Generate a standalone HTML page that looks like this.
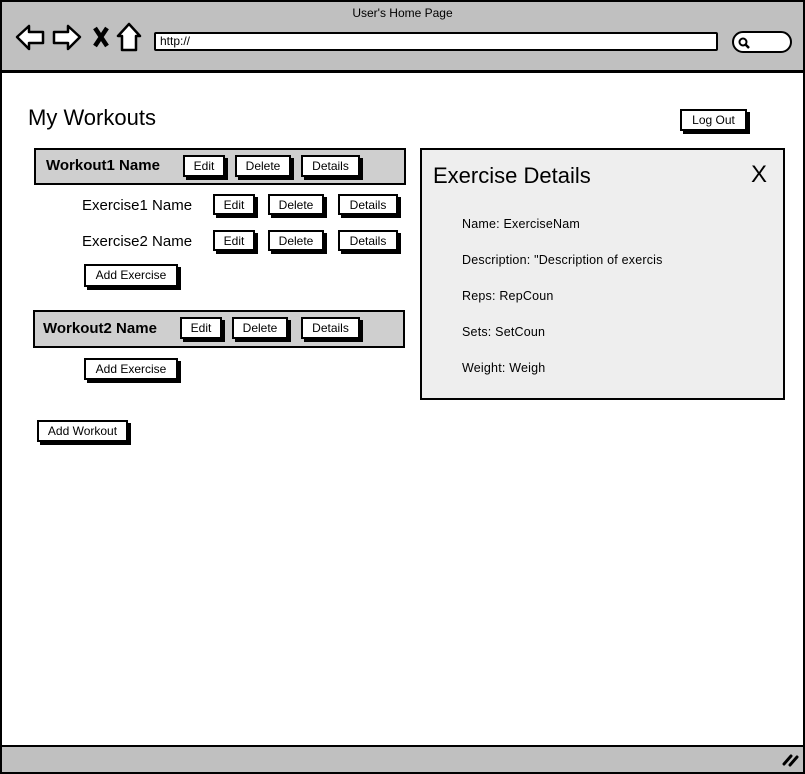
<!DOCTYPE html>
<html><head><style>
*{margin:0;padding:0;box-sizing:border-box}
body{width:805px;height:774px;background:#fff;position:relative;overflow:hidden;font-family:"Liberation Sans",sans-serif;color:#000}
.a{position:absolute}
.btn{position:absolute;background:#fff;border:2px solid #000;box-shadow:3px 3px 0 #000;font-size:12px;text-align:center;line-height:18px}
.t{position:absolute;white-space:nowrap}
.f{position:absolute;left:462px;font-size:12.5px;letter-spacing:0.2px;white-space:nowrap}
</style></head><body>
<div class="a" style="left:0;top:0;width:805px;height:774px;border:2px solid #000"></div>
<div class="a" style="left:0;top:0;width:805px;height:73px;background:#c0c0c0;border:2px solid #000;border-bottom-width:3px"></div>
<div class="t" style="left:0;width:805px;text-align:center;top:6px;font-size:12px">User's Home Page</div>
<svg class="a" style="left:14px;top:22px" width="130" height="32" viewBox="0 0 130 32">
<g fill="#fff" stroke="#000" stroke-width="2.5" stroke-linejoin="round">
<path d="M3 15 L15 4 L15 10 L29 10 L29 21 L15 21 L15 27 Z"/>
<path d="M66 15 L54 4 L54 10 L40 10 L40 21 L54 21 L54 27 Z"/>
<path d="M115 2 L104 14 L108 14 L108 28 L122 28 L122 14 L126 14 Z"/>
</g>
<path d="M81 6 L93 24 M93 6 L81 24" stroke="#000" stroke-width="4.5"/>
</svg>
<div class="a" style="left:154px;top:32px;width:564px;height:19px;background:#fff;border:2px solid #000;border-radius:2px"></div>
<div class="t" style="left:160px;top:34px;font-size:12px">http://</div>
<div class="a" style="left:732px;top:31px;width:60px;height:22px;background:#fff;border:2px solid #000;border-radius:11px"></div>
<svg class="a" style="left:737px;top:36px" width="14" height="14"><circle cx="6" cy="6" r="3.5" fill="none" stroke="#000" stroke-width="2"/><path d="M8 8 L12 12" stroke="#000" stroke-width="2.5"/></svg>
<div class="a" style="left:0;top:745px;width:805px;height:29px;background:#c0c0c0;border:2px solid #000"></div>
<svg class="a" style="left:782px;top:752px" width="18" height="16"><path d="M2 12 L9 4 M8 13 L15 5" stroke="#000" stroke-width="3" stroke-linecap="round"/></svg>

<div class="t" style="left:28px;top:105px;font-size:22px">My Workouts</div>
<div class="btn" style="left:680px;top:109px;width:67px;height:22px">Log Out</div>

<div class="a" style="left:34px;top:148px;width:372px;height:37px;background:#cfcfcf;border:2px solid #000"></div>
<div class="t" style="left:46px;top:157px;font-size:15px;font-weight:bold">Workout1 Name</div>
<div class="btn" style="left:183px;top:155px;width:42px;height:22px">Edit</div>
<div class="btn" style="left:235px;top:155px;width:56px;height:22px">Delete</div>
<div class="btn" style="left:301px;top:155px;width:59px;height:22px">Details</div>

<div class="t" style="left:82px;top:197px;font-size:15px">Exercise1 Name</div>
<div class="btn" style="left:213px;top:194px;width:42px;height:21px">Edit</div>
<div class="btn" style="left:268px;top:194px;width:56px;height:21px">Delete</div>
<div class="btn" style="left:338px;top:194px;width:60px;height:21px">Details</div>
<div class="t" style="left:82px;top:233px;font-size:15px">Exercise2 Name</div>
<div class="btn" style="left:213px;top:230px;width:42px;height:21px">Edit</div>
<div class="btn" style="left:268px;top:230px;width:56px;height:21px">Delete</div>
<div class="btn" style="left:338px;top:230px;width:60px;height:21px">Details</div>
<div class="btn" style="left:84px;top:264px;width:94px;height:23px">Add Exercise</div>

<div class="a" style="left:33px;top:310px;width:372px;height:38px;background:#cfcfcf;border:2px solid #000"></div>
<div class="t" style="left:43px;top:320px;font-size:15px;font-weight:bold">Workout2 Name</div>
<div class="btn" style="left:180px;top:317px;width:42px;height:22px">Edit</div>
<div class="btn" style="left:232px;top:317px;width:56px;height:22px">Delete</div>
<div class="btn" style="left:301px;top:317px;width:59px;height:22px">Details</div>
<div class="btn" style="left:84px;top:358px;width:94px;height:22px">Add Exercise</div>
<div class="btn" style="left:37px;top:420px;width:91px;height:22px">Add Workout</div>

<div class="a" style="left:420px;top:148px;width:365px;height:252px;background:#eeeeee;border:2px solid #000"></div>
<div class="t" style="left:433px;top:163px;font-size:22px">Exercise Details</div>
<div class="t" style="left:751px;top:161px;font-size:24px">X</div>
<div class="f" style="top:217px">Name: ExerciseNam</div>
<div class="f" style="top:253px">Description: "Description of exercis</div>
<div class="f" style="top:289px">Reps: RepCoun</div>
<div class="f" style="top:325px">Sets: SetCoun</div>
<div class="f" style="top:361px">Weight: Weigh</div>
</body></html>
